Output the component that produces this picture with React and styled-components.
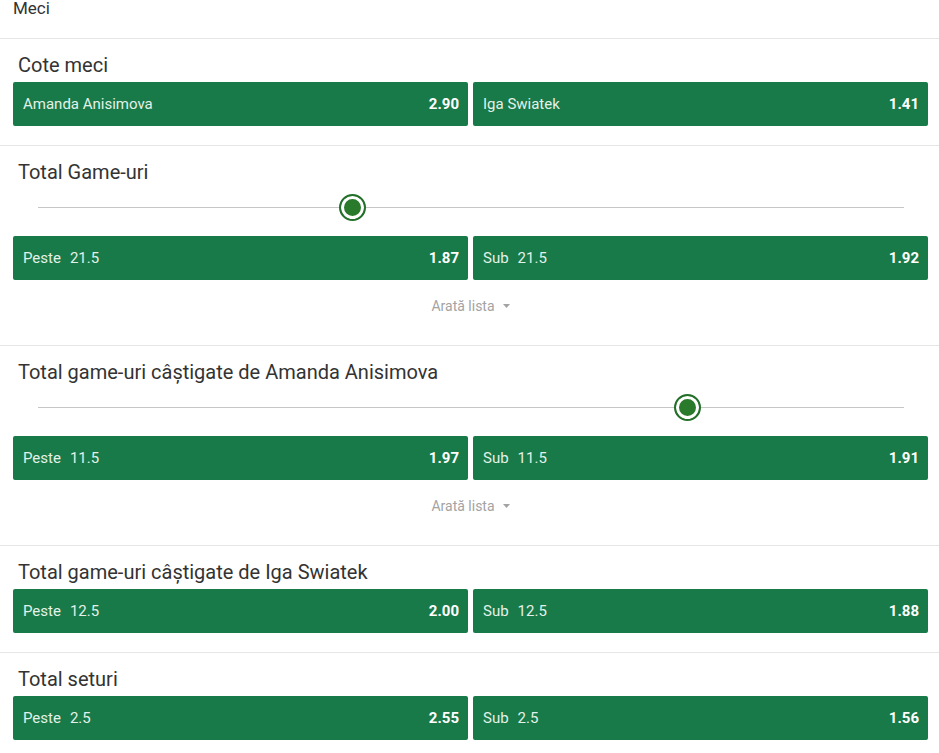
import React from 'react';
import styled, { createGlobalStyle } from 'styled-components';

const Global = createGlobalStyle`
  body {
    margin: 0;
    background: #fff;
    font-family: Roboto, "Liberation Sans", Arial, sans-serif;
    color: #333;
  }
`

const Page = styled.div`
  width: 939px;
`

const Header = styled.div`
  height: 38px;
  padding-left: 13px;
  font-size: 17px;
  line-height: 16px;
  color: #333;
`

const Section = styled.div`
  border-top: 1px solid #e6e6e6;
  padding: 13px 11px 19px 13px;
`

const Title = styled.div`
  font-size: 20px;
  line-height: 26px;
  padding-left: 5px;
  margin-bottom: 4px;
  color: #333;
`

const Slider = styled.div`
  position: relative;
  height: 44px;
  margin: -4px 24px 7px 25px;
`

const Track = styled.div`
  position: absolute;
  left: 0;
  right: 0;
  top: 22px;
  height: 1px;
  background: #c6c6c6;
`

const Thumb = styled.div`
  position: absolute;
  top: 9px;
  width: 27px;
  height: 27px;
  margin-left: -13px;
  box-sizing: border-box;
  border-radius: 50%;
  background: #2a7a2c;
  border: 2px solid #23702a;
  box-shadow: inset 0 0 0 3px #fff;
`

const Row = styled.div`
  display: grid;
  grid-template-columns: 1fr 1fr;
  gap: 5px;
`

const Odd = styled.div`
  display: flex;
  align-items: center;
  justify-content: space-between;
  height: 44px;
  padding: 0 9px 0 10px;
  background: #177a48;
  border-radius: 2px;
  cursor: pointer;
`

const Label = styled.span`
  font-size: 15px;
  color: #e3f1e8;
`

const Line = styled.span`
  margin-left: 9px;
`

const Price = styled.span`
  font-size: 15px;
  font-weight: 700;
  color: #fff;
`

const More = styled.div`
  display: flex;
  justify-content: center;
  align-items: center;
  gap: 8px;
  margin: 17px 0 11px;
  height: 18px;
  font-size: 14px;
  color: #a3a3a3;
`

const markets = [
  { title: 'Cote meci', odds: [['Amanda Anisimova', null, '2.90'], ['Iga Swiatek', null, '1.41']] },
  { title: 'Total Game-uri', slider: 36.3, more: true, odds: [['Peste', '21.5', '1.87'], ['Sub', '21.5', '1.92']] },
  { title: 'Total game-uri câștigate de Amanda Anisimova', slider: 74.9, more: true, odds: [['Peste', '11.5', '1.97'], ['Sub', '11.5', '1.91']] },
  { title: 'Total game-uri câștigate de Iga Swiatek', odds: [['Peste', '12.5', '2.00'], ['Sub', '12.5', '1.88']] },
  { title: 'Total seturi', odds: [['Peste', '2.5', '2.55'], ['Sub', '2.5', '1.56']] },
]

export default function App() {
  return (
    <Page>
      <Global />
      <Header>Meci</Header>
      {markets.map(m => (
        <Section key={m.title}>
          <Title>{m.title}</Title>
          {m.slider != null && (
            <Slider>
              <Track />
              <Thumb style={{ left: m.slider + '%' }} />
            </Slider>
          )}
          <Row>
            {m.odds.map(([name, line, price]) => (
              <Odd key={name}>
                <Label>{name}{line && <Line>{line}</Line>}</Label>
                <Price>{price}</Price>
              </Odd>
            ))}
          </Row>
          {m.more && (
            <More>
              Arată lista
              <svg width="7" height="4" viewBox="0 0 7 4"><path d="M0 0h7L3.5 4z" fill="#a3a3a3" /></svg>
            </More>
          )}
        </Section>
      ))}
    </Page>
  )
}
